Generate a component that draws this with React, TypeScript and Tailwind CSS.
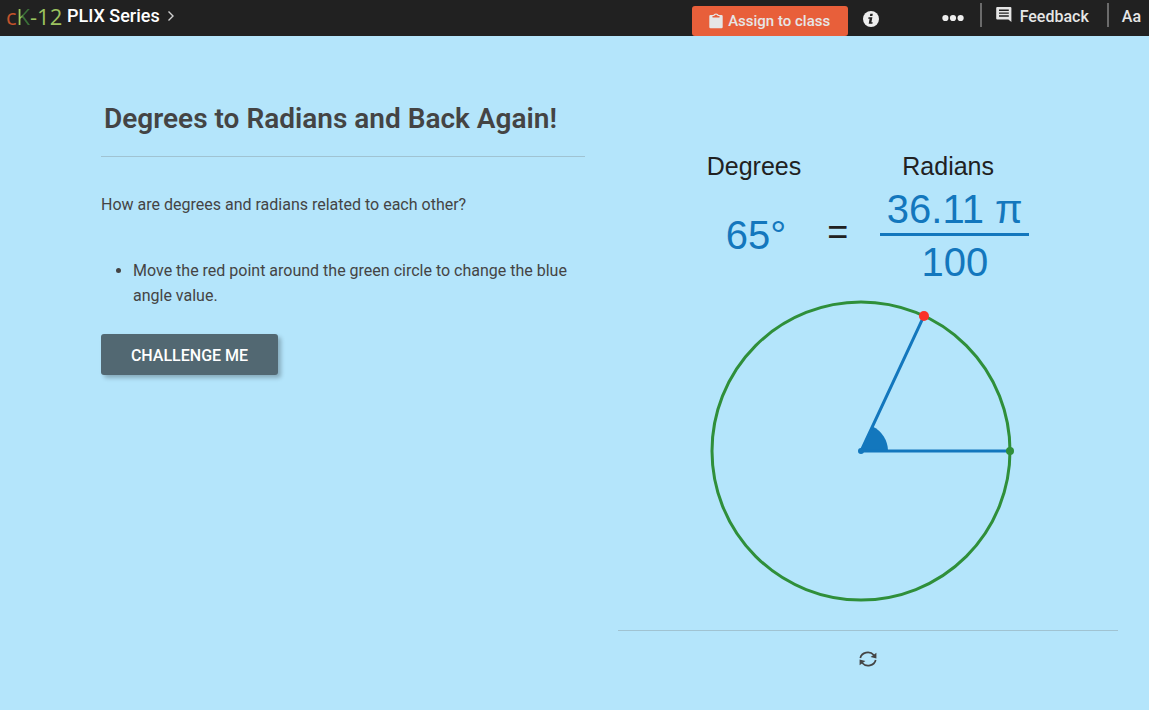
import { useState } from "react";

const CX = 243;
const CY = 151;
const R = 149;

function pointAt(degrees: number, radius: number) {
  const a = (degrees * Math.PI) / 180;
  return { x: CX + radius * Math.cos(a), y: CY - radius * Math.sin(a) };
}

function Logo() {
  return (
    <a href="#" aria-label="cK-12" className="flex w-14 font-['Open_Sans',sans-serif] text-[22px] leading-8 font-normal">
      <span className="text-[#c4532b]">c</span>
      <span className="bg-linear-to-r from-[#9ccb5a] from-25% to-[#3a7038] to-50% bg-clip-text text-transparent">K</span>
      <span className="text-[#9cc35f]">-12</span>
    </a>
  );
}

function TopBar() {
  return (
    <header className="flex h-9 items-start bg-[#212121] pr-2 pl-[6px] text-base font-medium text-[#e6e6e6]">
      <Logo />
      <a href="#" className="ml-[5px] flex items-center text-lg leading-8 text-white">
        PLIX Series
        <svg viewBox="0 0 8 12" className="ml-[7px] h-3 w-2" fill="none" stroke="#d0d0d0" strokeWidth="1.4">
          <path d="M1.5 1.5 L6 6 L1.5 10.5" />
        </svg>
      </a>

      <button className="mt-[6px] ml-auto flex h-[30px] w-[156px] items-center justify-center gap-[5px] rounded-[3px] bg-[#e85f3a] text-[15px]">
        <svg viewBox="0 0 14 16" className="h-4 w-[14px]" fill="#e6e6e6">
          <path fillRule="evenodd" d="M1.5 2 H4.3 A2.8 2.2 0 0 1 9.7 2 H12.5 A1.2 1.2 0 0 1 13.7 3.2 V14 A1.2 1.2 0 0 1 12.5 15.2 H1.5 A1.2 1.2 0 0 1 .3 14 V3.2 A1.2 1.2 0 0 1 1.5 2 Z M3.5 3 V4.6 H10.5 V3 H8.6 A1.6 1.3 0 0 0 5.4 3 Z" />
        </svg>
        Assign to class
      </button>

      <button aria-label="Information" className="mt-[11px] ml-[15px]">
        <svg viewBox="0 0 16 16" className="size-4">
          <circle cx="8" cy="8" r="8" fill="#eeeeee" />
          <path fill="#212121" d="M7.3 2.8 H9.8 L9.4 5 H6.9 Z M5.5 6.3 H9.4 L8.4 11.2 H9.7 L9.4 12.8 H5.7 L6.6 7.8 H5.2 Z" />
        </svg>
      </button>

      <button aria-label="More" className="mt-[14px] ml-[63px]">
        <svg viewBox="0 0 22 8" className="h-2 w-[22px]" fill="#eeeeee">
          <circle cx="3.4" cy="4" r="3.1" />
          <circle cx="11" cy="4" r="3.1" />
          <circle cx="18.6" cy="4" r="3.1" />
        </svg>
      </button>

      <button className="mt-[3px] ml-4 flex h-6 items-center border-l-2 border-[#6b6b6b] pl-[14px]">
        <svg viewBox="0 0 16 16" className="h-4 w-4" fill="#e6e6e6">
          <path fillRule="evenodd" d="M1.2 0 H14.4 A1 1 0 0 1 15.4 1 V15 L12.4 12.6 H1.2 A1 1 0 0 1 .2 11.6 V1 A1 1 0 0 1 1.2 0 Z M3 2.6 V4 H12.8 V2.6 Z M3 5.4 V6.8 H12.8 V5.4 Z M3 8.3 V9.7 H12.8 V8.3 Z" />
        </svg>
        <span className="ml-2 pt-1">Feedback</span>
      </button>
      <button className="mt-[3px] ml-[18px] flex h-6 items-center border-l-2 border-[#6b6b6b] pt-1 pl-[13px]">Aa</button>
    </header>
  );
}

function Question() {
  return (
    <section className="text-[#444444]">
      <h1 className="border-b border-[#a0c3d2] pb-[18px] pl-[3px] text-[28px] leading-[38px] font-semibold">
        Degrees to Radians and Back Again!
      </h1>
      <p className="mt-9 leading-6">How are degrees and radians related to each other?</p>
      <ul className="mt-[41px] list-disc pl-8 leading-[25px]">
        <li>Move the red point around the green circle to change the blue angle value.</li>
      </ul>
      <button className="mt-[26px] h-[41px] w-[177px] rounded-[3px] bg-[#526872] pt-[2px] font-medium text-white shadow-[3px_3px_4px_rgba(0,0,0,0.25)]">
        CHALLENGE ME
      </button>
    </section>
  );
}

function Readout({ degrees }: { degrees: number }) {
  return (
    <div className="flex justify-center font-['Liberation_Sans',Arial,sans-serif] text-[25px] leading-8 text-[#212121]">
      <div className="mr-[26px] text-center">
        <div>Degrees</div>
        <div className="mt-[29px] pl-1 text-[40px] leading-[48px] text-[#1377bd]">{degrees}°</div>
      </div>
      <div className="mt-16 text-[36px] leading-9">=</div>
      <div className="ml-8 w-[149px] text-center">
        <div className="pl-[22px] text-left">Radians</div>
        <div className="border-b-3 border-[#1377bd] pt-[3px] text-[40px] leading-[48px] text-[#1377bd]">
          {((degrees / 180) * 100).toFixed(2)} π
        </div>
        <div className="pt-[2px] text-[40px] leading-[48px] text-[#1377bd]">100</div>
      </div>
    </div>
  );
}

function Circle({ degrees }: { degrees: number }) {
  const red = pointAt(degrees, R);
  const wedge = pointAt(degrees, 27);
  return (
    <svg viewBox="0 0 500 302" className="w-full">
      <circle cx={CX} cy={CY} r={R} fill="none" stroke="#2f8f3a" strokeWidth="3" />
      <path d={`M${CX} ${CY} H${CX + 27} A27 27 0 0 0 ${wedge.x} ${wedge.y} Z`} fill="#1377bd" />
      <path d={`M${CX + R} ${CY} H${CX} L${red.x} ${red.y}`} fill="none" stroke="#1377bd" strokeWidth="3" />
      <circle cx={CX} cy={CY} r="3" fill="#1377bd" />
      <circle cx={CX + R} cy={CY} r="4" fill="#2f8f3a" />
      <circle cx={red.x} cy={red.y} r="5" fill="#fb3029" />
    </svg>
  );
}

export default function App() {
  const [degrees, setDegrees] = useState(65);

  return (
    <div className="min-h-screen bg-[#b4e5fb] font-[Roboto,sans-serif] text-base">
      <TopBar />
      <main className="grid grid-cols-[484fr_500fr] gap-[33px] pr-[31px] pl-[101px]">
        <div className="pt-16">
          <Question />
        </div>
        <section className="pt-[114px]">
          <Readout degrees={degrees} />
          <div className="mt-[14px]">
            <Circle degrees={degrees} />
          </div>
          <div className="mt-7 flex justify-center border-t border-[#a0c3d2] pt-5">
            <button aria-label="Reset" onClick={() => setDegrees(65)}>
              <svg viewBox="0 0 18 16" className="h-4 w-[18px]" fill="none" stroke="#444444" strokeWidth="1.7">
                <path d="M1.3 7 A7.7 7 0 0 1 14.8 4" />
                <path d="M16.7 9 A7.7 7 0 0 1 3.2 12" />
                <path d="M17.4 1.8 V7.4 L11.6 6 Z M.6 14.2 V8.6 L6.4 10 Z" fill="#444444" stroke="none" />
              </svg>
            </button>
          </div>
        </section>
      </main>
    </div>
  );
}
